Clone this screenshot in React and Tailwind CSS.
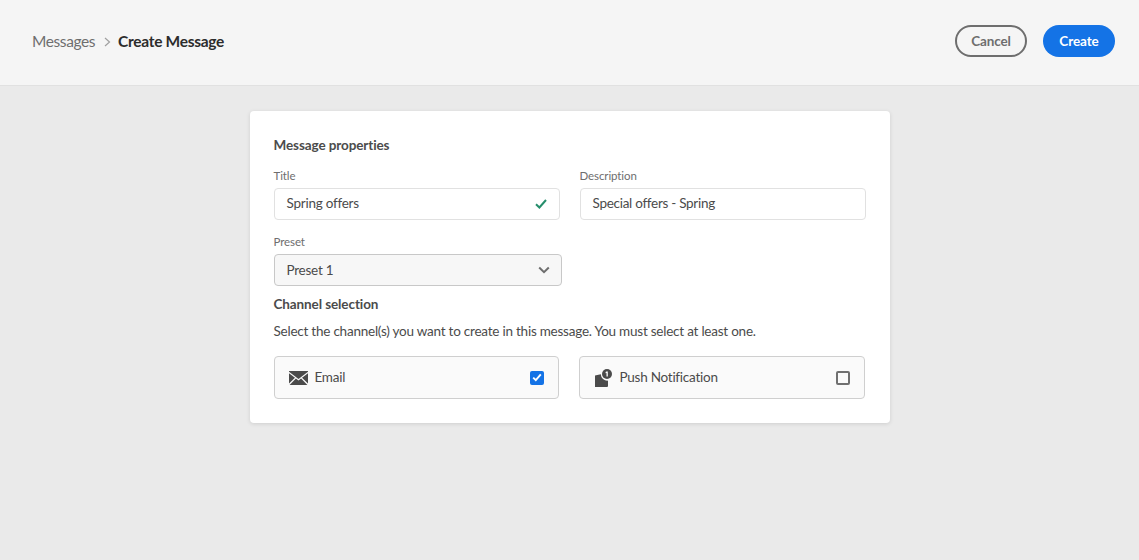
import React from "react";

const font = { fontFamily: 'Lato, "Noto Sans", sans-serif' };

function Label({ children }) {
  return <div className="h-[14px] text-[11.5px] leading-[12px] tracking-[-0.1px] text-[#6e6e6e] mb-[4px]">{children}</div>;
}

function MailIcon() {
  return (
    <svg width="19" height="14" viewBox="0 0 19 14" className="block">
      <path fill="#4b4b4b" d="M0 0.8 9.5 8 19 0.8V0H0Z" />
      <path fill="#4b4b4b" d="M0 2.3V12.4L6 6.8ZM19 2.3V12.4L13 6.8ZM6.9 7.5 0.6 14H18.4L12.1 7.5 9.5 9.5Z" />
    </svg>
  );
}

function PushIcon() {
  return (
    <svg width="17" height="18" viewBox="0 0 17 18" className="block">
      <path fill="#4b4b4b" d="M0 6.5 5.8 5.2A6.6 6.6 0 0 0 13 11.6V17a1 1 0 0 1-1 1H0Z" />
      <circle cx="12" cy="5" r="5" fill="#4b4b4b" />
      <path fill="#fff" d="M11.4 2.4h1.4v5h-1.3V3.9l-.9.3V3.1Z" />
    </svg>
  );
}

function Tile({ icon, label, checked, box }) {
  return (
    <div className={`${box} h-[43px] flex items-center rounded-[4px] border border-[#cfcfcf] bg-[#fafafa] pr-[14px]`}>
      {icon}
      <span className="flex-1 text-[13.5px] tracking-[-0.25px] text-[#4b4b4b]">{label}</span>
      {checked ? (
        <span className="w-[14px] h-[14px] rounded-[2px] bg-[#1473e6] flex items-center justify-center">
          <svg width="10" height="9" viewBox="0 0 10 9">
            <path d="M1.2 4.6 3.8 7.2 8.8 1.4" fill="none" stroke="#fff" strokeWidth="1.9" />
          </svg>
        </span>
      ) : (
        <span className="w-[14px] h-[14px] rounded-[2px] border-2 border-[#707070] bg-[#fafafa]" />
      )}
    </div>
  );
}

export default function App() {
  return (
    <div style={font} className="w-full h-[560px] bg-[#eaeaea] overflow-hidden">
      <header className="h-[86px] bg-[#f5f5f5] border-b border-[#e1e1e1] flex items-center justify-between pl-[32px] pr-[24px]">
        <div className="flex items-center -mt-[2px]">
          <span className="text-[15.5px] tracking-[-0.4px] text-[#6e6e6e]">Messages</span>
          <svg width="7" height="10" viewBox="0 0 7 10" className="ml-[9px] mr-[7px]">
            <path d="M1 1 5.5 5 1 9" fill="none" stroke="#a0a0a0" strokeWidth="1.2" />
          </svg>
          <span className="text-[15.5px] font-bold tracking-[-0.3px] text-[#2c2c2c]">Create Message</span>
        </div>
        <div className="flex items-center gap-[16px] -mt-[3px]">
          <button className="w-[72px] h-[32px] rounded-full border-2 border-[#6e6e6e] text-[13.5px] font-bold tracking-[-0.1px] text-[#6e6e6e]">Cancel</button>
          <button className="w-[72px] h-[32px] rounded-full bg-[#1473e6] text-[13.5px] font-bold tracking-[-0.1px] text-white">Create</button>
        </div>
      </header>

      <main className="flex justify-center pt-[25px]">
        <section className="w-[640px] h-[312px] bg-white rounded-[4px] shadow-[0_1px_4px_rgba(0,0,0,0.12)] px-[24px] pt-[25px]">
          <h2 className="h-[18px] text-[13.5px] leading-[18px] font-bold tracking-[-0.1px] text-[#4b4b4b]">Message properties</h2>
          <div className="flex gap-[20px] mt-[16px]">
            <div className="w-[286px]">
              <Label>Title</Label>
              <div className="h-[32px] rounded-[4px] border border-[#e1e1e1] flex items-center justify-between pl-[12px] pr-[12px] text-[13.5px] tracking-[-0.25px] text-[#4b4b4b]">
                <span className="pb-[2px]">Spring offers</span>
                <svg width="12" height="10" viewBox="0 0 12 10">
                  <path d="M1 5.2 4.4 8.5 11 1" fill="none" stroke="#268e6c" strokeWidth="2" />
                </svg>
              </div>
            </div>
            <div className="w-[286px]">
              <Label>Description</Label>
              <div className="h-[32px] rounded-[4px] border border-[#e1e1e1] flex items-center pl-[12px] text-[13.5px] tracking-[-0.28px] text-[#4b4b4b]">
                <span className="pb-[2px]">Special offers - Spring</span>
              </div>
            </div>
          </div>
          <div className="mt-[16px] w-[288px]">
            <Label>Preset</Label>
            <div className="h-[32px] rounded-[4px] border border-[#c8c8c8] bg-[#f7f7f7] flex items-center justify-between pl-[12px] pr-[11px] text-[13.5px] tracking-[-0.25px] text-[#4b4b4b]">
              <span>Preset 1</span>
              <svg width="12" height="8" viewBox="0 0 12 8">
                <path d="M1.2 1.5 6 6.2 10.8 1.5" fill="none" stroke="#6e6e6e" strokeWidth="2" />
              </svg>
            </div>
          </div>
          <h2 className="mt-[9px] h-[18px] text-[13.5px] leading-[18px] font-bold tracking-[-0.1px] text-[#4b4b4b]">Channel selection</h2>
          <p className="mt-[9px] h-[18px] text-[13.5px] leading-[18px] tracking-[-0.23px] text-[#4b4b4b] whitespace-nowrap">Select the channel(s) you want to create in this message. You must select at least one.</p>
          <div className="flex gap-[20px] mt-[16px]">
            <Tile icon={<span className="mr-[7px]"><MailIcon /></span>} label="Email" checked box="w-[285px] pl-[14px]" />
            <Tile icon={<span className="mr-[8px]"><PushIcon /></span>} label="Push Notification" box="w-[286px] pl-[15px]" />
          </div>
        </section>
      </main>
    </div>
  );
}
